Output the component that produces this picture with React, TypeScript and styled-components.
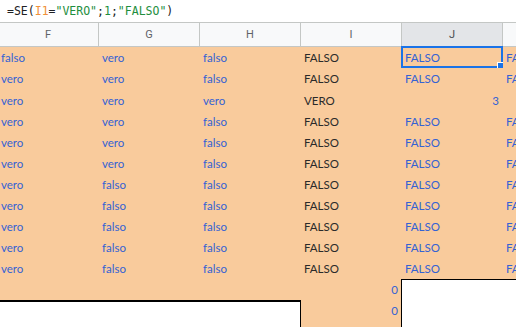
import React from "react";
import styled, { createGlobalStyle } from "styled-components";

const GlobalStyle = createGlobalStyle`
  html, body { margin: 0; padding: 0; background: #ffffff; overflow: hidden; }
  body { width: 516px; height: 327px; }
`;

const Page = styled.div`
  width: 516px;
  height: 327px;
  overflow: hidden;
  display: flex;
  flex-direction: column;
  background: #ffffff;
`;

const FormulaBar = styled.div`
  height: 22px;
  flex: none;
  display: flex;
  align-items: center;
  padding-left: 7px;
  font-family: "DejaVu Sans Mono", "Liberation Mono", monospace;
  font-size: 11.5px;
  color: #202124;
  white-space: pre;
`;

const Tok = styled.span<{ $kind?: "ref" | "lit" }>`
  color: ${(p) => (p.$kind === "ref" ? "#f0913a" : p.$kind === "lit" ? "#1e8e3e" : "#202124")};
`;

const Sheet = styled.div`
  margin-left: -2px;
  display: grid;
  grid-template-columns: 101px 101px 101px 101px 101px 1fr;
  flex: none;
`;

const HeaderCell = styled.div<{ $selected?: boolean }>`
  height: 25px;
  box-sizing: border-box;
  border-top: 1px solid #c4c7c5;
  border-bottom: 1px solid #c4c7c5;
  border-right: 1px solid #c4c7c5;
  background: ${(p) => (p.$selected ? "#e3e5e8" : "#f8f9fa")};
  color: ${(p) => (p.$selected ? "#4a4d51" : "#5f6368")};
  display: flex;
  align-items: center;
  justify-content: center;
  font-family: Roboto, "Liberation Sans", sans-serif;
  font-size: 11px;
  overflow: hidden;
`;

type Edges = { t?: number; r?: number; l?: number };

const shadow = (e?: Edges) => {
  if (!e) return "none";
  const parts: string[] = [];
  if (e.t) parts.push(`inset 0 ${e.t}px 0 0 #000`);
  if (e.r) parts.push(`inset -${e.r}px 0 0 0 #000`);
  if (e.l) parts.push(`inset ${e.l}px 0 0 0 #000`);
  return parts.length ? parts.join(", ") : "none";
};

const Cell = styled.div<{
  $h: number;
  $tone: "blue" | "dark";
  $right?: boolean;
  $white?: boolean;
  $edges?: Edges;
}>`
  position: relative;
  height: ${(p) => p.$h}px;
  box-sizing: border-box;
  background: ${(p) => (p.$white ? "#ffffff" : "#f9cb9c")};
  box-shadow: ${(p) => shadow(p.$edges)};
  color: ${(p) => (p.$tone === "blue" ? "#3462d4" : "#2a2a2a")};
  font-family: Lato, "Liberation Sans", sans-serif;
  font-size: 11.5px;
  font-weight: 400;
  line-height: 13px;
  display: flex;
  align-items: flex-end;
  justify-content: ${(p) => (p.$right ? "flex-end" : "flex-start")};
  padding: 0 4px 4px 3px;
  white-space: nowrap;
  overflow: ${(p) => (p.$right ? "hidden" : "visible")};
`;

const Clip = styled.div`
  overflow: hidden;
`;

const Selection = styled.div`
  position: absolute;
  top: -1px;
  left: -1px;
  right: 0;
  bottom: 0;
  border: 2px solid #1a73e8;
  pointer-events: none;
`;

const Handle = styled.div`
  position: absolute;
  right: -3px;
  bottom: -3px;
  width: 7px;
  height: 7px;
  box-sizing: border-box;
  background: #1a73e8;
  border: 1px solid #ffffff;
`;

type Spec = {
  text?: string;
  tone?: "blue" | "dark";
  right?: boolean;
  white?: boolean;
  edges?: Edges;
  selected?: boolean;
  clip?: boolean;
};

const b = (text: string): Spec => ({ text, tone: "blue" });
const d = (text: string): Spec => ({ text, tone: "dark" });

const mainRow = (f: string, g: string, h: string): Spec[] => [
  b(f),
  b(g),
  b(h),
  d("FALSO"),
  b("FALSO"),
  { ...b("FALSO"), clip: true },
];

const rows: { h: number; cells: Spec[] }[] = [
  {
    h: 21,
    cells: [b("falso"), b("vero"), b("falso"), d("FALSO"), { ...b("FALSO"), selected: true }, { ...b("FALSO"), clip: true }],
  },
  { h: 21, cells: mainRow("vero", "vero", "falso") },
  { h: 22, cells: [b("vero"), b("vero"), b("vero"), d("VERO"), { ...b("3"), right: true }, {}] },
  { h: 21, cells: mainRow("vero", "vero", "falso") },
  { h: 21, cells: mainRow("vero", "vero", "falso") },
  { h: 21, cells: mainRow("vero", "vero", "falso") },
  { h: 21, cells: mainRow("vero", "falso", "falso") },
  { h: 21, cells: mainRow("vero", "falso", "falso") },
  { h: 21, cells: mainRow("vero", "falso", "falso") },
  { h: 21, cells: mainRow("vero", "falso", "falso") },
  { h: 21, cells: mainRow("vero", "falso", "falso") },
  {
    h: 21,
    cells: [
      {},
      {},
      {},
      { ...b("0"), right: true, edges: { r: 1 } },
      { white: true, edges: { t: 1 } },
      { white: true, edges: { t: 1 } },
    ],
  },
  {
    h: 21,
    cells: [
      { white: true, edges: { t: 2 } },
      { white: true, edges: { t: 2 } },
      { white: true, edges: { t: 2, r: 1 } },
      { ...b("0"), right: true, edges: { r: 1 } },
      { white: true },
      { white: true },
    ],
  },
  {
    h: 21,
    cells: [
      { white: true },
      { white: true },
      { white: true, edges: { r: 1 } },
      { edges: { r: 1 } },
      { white: true },
      { white: true },
    ],
  },
];

const columns = ["F", "G", "H", "I", "J", ""];

export default function App() {
  return (
    <Page>
      <GlobalStyle />
      <FormulaBar>
        <Tok>=SE(</Tok>
        <Tok $kind="ref">I1</Tok>
        <Tok>=</Tok>
        <Tok $kind="lit">"VERO"</Tok>
        <Tok>;</Tok>
        <Tok $kind="lit">1</Tok>
        <Tok>;</Tok>
        <Tok $kind="lit">"FALSO"</Tok>
        <Tok>)</Tok>
      </FormulaBar>
      <Sheet>
        {columns.map((c, i) => (
          <HeaderCell key={`h${i}`} $selected={c === "J"}>
            {c}
          </HeaderCell>
        ))}
        {rows.map((row, r) =>
          row.cells.map((cell, ci) => (
            <Cell
              key={`${r}-${ci}`}
              $h={row.h}
              $tone={cell.tone ?? "blue"}
              $right={cell.right}
              $white={cell.white}
              $edges={cell.edges}
            >
              {cell.clip ? <Clip>{cell.text}</Clip> : cell.text}
              {cell.selected && (
                <Selection>
                  <Handle />
                </Selection>
              )}
            </Cell>
          ))
        )}
      </Sheet>
    </Page>
  );
}
